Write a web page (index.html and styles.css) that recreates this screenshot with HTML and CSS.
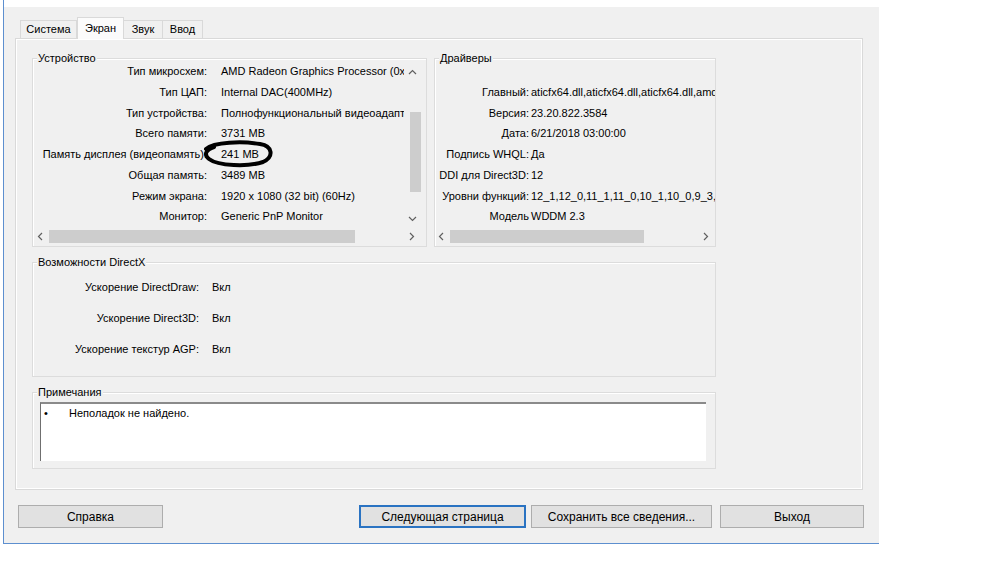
FILE: index.html
```html
<!DOCTYPE html>
<html lang="ru">
<head>
  <meta charset="UTF-8">
  <title>Средство диагностики DirectX</title>
  <link rel="stylesheet" href="styles.css">
</head>
<body>

<div class="window">
  <div class="titlebar"></div>
  <div class="client">

    <div class="tabs">
      <div class="tab t-system">Система</div>
      <div class="tab t-screen active">Экран</div>
      <div class="tab t-sound">Звук</div>
      <div class="tab t-input">Ввод</div>
    </div>

    <div class="panel">
      <div class="top-row">

        <!-- Устройство -->
        <div class="group device">
          <div class="group-title">Устройство</div>
          <div class="scroll-box">
            <div class="viewport">
              <div class="info-row"><span class="label">Тип микросхем:</span><span class="value">AMD Radeon Graphics Processor (0x6987)</span></div>
              <div class="info-row"><span class="label">Тип ЦАП:</span><span class="value">Internal DAC(400MHz)</span></div>
              <div class="info-row"><span class="label">Тип устройства:</span><span class="value">Полнофункциональный видеоадаптер</span></div>
              <div class="info-row"><span class="label">Всего памяти:</span><span class="value">3731 MB</span></div>
              <div class="info-row"><span class="label">Память дисплея (видеопамять):</span><span class="value marked">241 MB
                <svg class="scribble" width="74" height="28" viewBox="0 0 74 28">
                  <path d="M4 9 C12 2, 40 1, 58 4 C71 6, 72 17, 61 22 C46 27, 16 26, 7 19 C2 15, 3 10, 12 7" fill="none" stroke="#000" stroke-width="4" stroke-linecap="round"/>
                </svg>
              </span></div>
              <div class="info-row"><span class="label">Общая память:</span><span class="value">3489 MB</span></div>
              <div class="info-row"><span class="label">Режим экрана:</span><span class="value">1920 x 1080 (32 bit) (60Hz)</span></div>
              <div class="info-row"><span class="label">Монитор:</span><span class="value">Generic PnP Monitor</span></div>
            </div>
            <div class="vscroll">
              <svg class="arrow" width="9" height="6" viewBox="0 0 9 6"><path d="M1 5 L4.5 1.5 L8 5" fill="none" stroke="#606060" stroke-width="1.2"/></svg>
              <div class="vtrack"><div class="vthumb"></div></div>
              <svg class="arrow" width="9" height="6" viewBox="0 0 9 6"><path d="M1 1 L4.5 4.5 L8 1" fill="none" stroke="#606060" stroke-width="1.2"/></svg>
            </div>
            <div class="hscroll">
              <svg class="arrow" width="6" height="9" viewBox="0 0 6 9"><path d="M5 1 L1.5 4.5 L5 8" fill="none" stroke="#606060" stroke-width="1.2"/></svg>
              <div class="htrack"><div class="hthumb device-thumb"></div></div>
              <svg class="arrow" width="6" height="9" viewBox="0 0 6 9"><path d="M1 1 L4.5 4.5 L1 8" fill="none" stroke="#606060" stroke-width="1.2"/></svg>
            </div>
          </div>
        </div>

        <!-- Драйверы -->
        <div class="group drivers">
          <div class="group-title">Драйверы</div>
          <div class="viewport">
            <div class="info-row"></div>
            <div class="info-row"><span class="label">Главный:</span><span class="value">aticfx64.dll,aticfx64.dll,aticfx64.dll,amdxc64.dll</span></div>
            <div class="info-row"><span class="label">Версия:</span><span class="value">23.20.822.3584</span></div>
            <div class="info-row"><span class="label">Дата:</span><span class="value">6/21/2018 03:00:00</span></div>
            <div class="info-row"><span class="label">Подпись WHQL:</span><span class="value">Да</span></div>
            <div class="info-row"><span class="label">DDI для Direct3D:</span><span class="value">12</span></div>
            <div class="info-row"><span class="label">Уровни функций:</span><span class="value">12_1,12_0,11_1,11_0,10_1,10_0,9_3,9_2,9_1</span></div>
            <div class="info-row"><span class="label">Модель</span><span class="value">WDDM 2.3</span></div>
          </div>
          <div class="hscroll">
            <svg class="arrow" width="6" height="9" viewBox="0 0 6 9"><path d="M5 1 L1.5 4.5 L5 8" fill="none" stroke="#606060" stroke-width="1.2"/></svg>
            <div class="htrack"><div class="hthumb drivers-thumb"></div></div>
            <svg class="arrow" width="6" height="9" viewBox="0 0 6 9"><path d="M1 1 L4.5 4.5 L1 8" fill="none" stroke="#606060" stroke-width="1.2"/></svg>
          </div>
        </div>

      </div>

      <!-- Возможности DirectX -->
      <div class="group directx">
        <div class="group-title">Возможности DirectX</div>
        <div class="dx-list">
          <div class="dx-row"><span class="label">Ускорение DirectDraw:</span><span class="value">Вкл</span></div>
          <div class="dx-row"><span class="label">Ускорение Direct3D:</span><span class="value">Вкл</span></div>
          <div class="dx-row"><span class="label">Ускорение текстур AGP:</span><span class="value">Вкл</span></div>
        </div>
      </div>

      <!-- Примечания -->
      <div class="group notes">
        <div class="group-title">Примечания</div>
        <div class="notes-box">
          <div class="note"><span class="bullet">•</span>Неполадок не найдено.</div>
        </div>
      </div>
    </div>

    <div class="buttons">
      <button class="btn help">Справка</button>
      <button class="btn next focused">Следующая страница</button>
      <button class="btn save">Сохранить все сведения...</button>
      <button class="btn exit">Выход</button>
    </div>

  </div>
</div>

</body>
</html>
```

FILE: styles.css
```css
body {
  margin: 0;
  background-color: #fff;
  font-family: "Liberation Sans", Arial, sans-serif;
  font-size: 11px;
  color: #000;
}
.window {
  margin-left: 3px;
  width: 875px;
  border-left: 1px solid #5d8fcf;
  border-bottom: 1px solid #5d8fcf;
}
.titlebar {
  height: 7px;
  background-color: #fff;
}
.client {
  background-color: #f0f0f0;
  padding: 10px 16px 15px 11px;
}

/* вкладки */
.tabs {
  display: flex;
  align-items: flex-end;
  height: 21px;
  padding-left: 5px;
  position: relative;
  z-index: 1;
}
.tab {
  box-sizing: border-box;
  height: 18px;
  line-height: 17px;
  text-align: center;
  border: 1px solid #d9d9d9;
  border-bottom: none;
  background-color: #f0f0f0;
}
.t-system { width: 57px; }
.t-screen { width: 47px; }
.t-sound { width: 40px; margin-left: -1px; }
.t-input { width: 41px; margin-left: -1px; }
.tab.active {
  height: 22px;
  line-height: 20px;
  margin-bottom: -1px;
  background-color: #fbfbfb;
}
.panel {
  border: 1px solid #d9d9d9;
  box-shadow: inset 1px 1px 0 #fff, inset -1px -1px 0 #fff;
  background-color: #f0f0f0;
  padding: 19px 146px 18px 16px;
  height: 413px;
}

/* рамки групп */
.group {
  border: 1px solid #dcdcdc;
  box-shadow: inset 1px 1px 0 #fff;
}
.group-title {
  display: table;
  height: 14px;
  line-height: 14px;
  margin: -8px 0 -4px 4px;
  padding: 0 1px;
  background-color: #f0f0f0;
}
.top-row {
  display: flex;
  gap: 7px;
}
.device {
  width: 393px;
  padding-bottom: 1px;
}
.drivers {
  flex: 1;
  min-width: 0;
  padding-bottom: 1px;
}
.scroll-box {
  display: grid;
  grid-template-columns: 368px 17px;
  grid-template-rows: 167px 17px;
  margin-left: 3px;
}
.viewport {
  overflow: hidden;
  white-space: nowrap;
}
.drivers .viewport {
  height: 167px;
  margin-left: 2px;
}
.info-row {
  display: flex;
  height: 20.75px;
  line-height: 20.75px;
}
.device .label {
  width: 171px;
  flex: none;
  text-align: right;
  margin-right: 14px;
}
.drivers .label {
  width: 92px;
  flex: none;
  text-align: right;
  margin-right: 2px;
}
.marked {
  position: relative;
}
.scribble {
  position: absolute;
  left: -19px;
  top: -4px;
}

/* полосы прокрутки */
.vscroll {
  display: flex;
  flex-direction: column;
  align-items: center;
  padding-top: 2px;
}
.vscroll .arrow {
  margin: 6px 0;
}
.vtrack {
  flex: 1;
  width: 100%;
  padding-top: 31px;
  padding-bottom: 18px;
}
.vthumb {
  margin-left: 6px;
  width: 11px;
  height: 80px;
  background-color: #cdcdcd;
}
.hscroll {
  grid-column: 1 / 3;
  display: flex;
  align-items: center;
  height: 17px;
  padding: 0 6px 0 1px;
  gap: 6px;
}
.drivers .hscroll {
  width: 271px;
  margin-left: 2px;
}
.htrack {
  flex: 1;
  height: 13px;
}
.hthumb {
  height: 13px;
  background-color: #cdcdcd;
}
.device-thumb {
  width: 306px;
}
.drivers-thumb {
  width: 194px;
}

/* Возможности DirectX */
.directx {
  margin-top: 15px;
  padding-bottom: 11px;
}
.dx-list {
  padding: 7px 0 0 3px;
}
.dx-row {
  display: flex;
  height: 31px;
  line-height: 31px;
}
.dx-row .label {
  width: 163px;
  text-align: right;
  margin-right: 13px;
}

/* Примечания */
.notes {
  margin-top: 15px;
  padding-bottom: 7px;
}
.notes-box {
  margin: 7px 9px 0 7px;
  height: 56px;
  background-color: #fff;
  border-top: 2px solid #8a8a8a;
  border-left: 1px solid #6f6f6f;
  padding-top: 1px;
}
.note {
  line-height: 16px;
  padding-left: 3px;
}
.bullet {
  display: inline-block;
  width: 25px;
}

/* кнопки */
.buttons {
  display: flex;
  margin-top: 15px;
  padding-left: 3px;
}
.btn {
  height: 23px;
  font-family: inherit;
  font-size: 12px;
  background-color: #e1e1e1;
  border: 1px solid #adadad;
  padding: 0;
  color: #000;
}
.help {
  width: 145px;
  margin-right: auto;
}
.next {
  width: 167px;
}
.save {
  width: 181px;
  margin-left: 5px;
}
.exit {
  width: 144px;
  margin-left: 8px;
  margin-right: -1px;
}
.focused {
  border: 2px solid #2a73c2;
}
```
